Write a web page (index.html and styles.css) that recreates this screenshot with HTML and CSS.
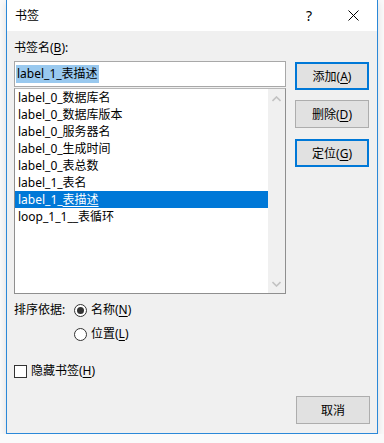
FILE: index.html
```html
<!DOCTYPE html>
<html lang="zh-CN">
<head>
    <meta charset="UTF-8">
    <title>书签</title>
    <link rel="stylesheet" href="styles.css">
</head>
<body>
    <div class="window">
        <!-- Title bar -->
        <div class="titlebar">
            <span class="title">书签</span>
            <span class="help">?</span>
            <span class="close">
                <svg width="11" height="11" viewBox="0 0 11 11">
                    <path d="M0.5 0.5 L10.5 10.5 M10.5 0.5 L0.5 10.5" stroke="#000" stroke-width="1" fill="none"/>
                </svg>
            </span>
        </div>

        <div class="content">
            <div class="main">
                <div class="left">
                    <div class="field-label">书签名(<u>B</u>):</div>
                    <div class="name-input"><span class="selected-text">label_1_表描述</span></div>
                    <div class="listbox">
                        <ul class="items">
                            <li>label_0_数据库名</li>
                            <li>label_0_数据库版本</li>
                            <li>label_0_服务器名</li>
                            <li>label_0_生成时间</li>
                            <li>label_0_表总数</li>
                            <li>label_1_表名</li>
                            <li class="active">label_1_<u>表描述</u></li>
                            <li>loop_1_1__表循环</li>
                        </ul>
                        <div class="scrollbar">
                            <svg width="9" height="6" viewBox="0 0 9 6">
                                <path d="M0.5 5 L4.5 1 L8.5 5" stroke="#c2c2c2" stroke-width="1.6" fill="none"/>
                            </svg>
                            <svg width="9" height="6" viewBox="0 0 9 6">
                                <path d="M0.5 1 L4.5 5 L8.5 1" stroke="#c2c2c2" stroke-width="1.6" fill="none"/>
                            </svg>
                        </div>
                    </div>
                </div>

                <div class="buttons">
                    <button class="btn default">添加(<u>A</u>)</button>
                    <button class="btn">删除(<u>D</u>)</button>
                    <button class="btn default">定位(<u>G</u>)</button>
                </div>
            </div>

            <!-- Sort order -->
            <div class="sort-row">
                <span class="sort-label">排序依据:</span>
                <span class="radio checked"></span>
                <span>名称(<u>N</u>)</span>
            </div>
            <div class="sort-row second">
                <span class="radio"></span>
                <span>位置(<u>L</u>)</span>
            </div>

            <div class="check-row">
                <span class="checkbox"></span>
                <span>隐藏书签(<u>H</u>)</span>
            </div>

            <div class="footer">
                <button class="btn">取消</button>
            </div>
        </div>
    </div>
</body>
</html>
```

FILE: styles.css
```css
* {
    margin: 0;
    padding: 0;
    box-sizing: border-box;
}

body {
    background: #fafafa;
    font-family: "Noto Sans", "Noto Sans CJK SC", sans-serif;
    font-size: 12px;
    color: #000;
}

u {
    text-decoration: underline;
    text-underline-offset: 2px;
}

.window {
    margin-left: 6px;
    width: 372px;
    border: 1px solid #2b88d8;
    border-top: none;
    background: #f0f0f0;
    box-shadow: 0 2px 8px rgba(0, 0, 0, 0.12);
}

.titlebar {
    height: 31px;
    background: #fff;
    display: flex;
    align-items: center;
    padding-left: 8px;
}

.title {
    flex: 1;
    line-height: 16px;
}

.help {
    width: 46px;
    text-align: center;
    font-size: 14px;
    margin-right: -2px;
}

.close {
    width: 46px;
    height: 31px;
    display: flex;
    align-items: center;
    justify-content: center;
    margin-right: 1px;
}

.content {
    padding: 9px 7px 9px 7px;
}

.main {
    display: flex;
}

.left {
    width: 272px;
}

.field-label {
    line-height: 16px;
}

.name-input {
    margin-top: 5px;
    height: 26px;
    background: #fff;
    border: 1px solid #a8a8a8;
    padding: 3px 1px;
}

.selected-text {
    display: inline-block;
    background: #99c9ef;
    line-height: 18px;
    padding: 0 1px;
}

.listbox {
    margin-top: 1px;
    height: 206px;
    border: 1px solid #8f8f8f;
    border-top-color: #b8b8b8;
    background: #fff;
    display: flex;
}

.items {
    list-style: none;
    flex: 1;
}

.items li {
    line-height: 17px;
    height: 17px;
    padding-left: 3px;
    white-space: nowrap;
}

.items li.active {
    background: #0078d7;
    color: #fff;
}

.scrollbar {
    width: 17px;
    background: #f0f0f0;
    display: flex;
    flex-direction: column;
    justify-content: space-between;
    align-items: center;
    padding: 7px 0 6px;
}

.buttons {
    margin-left: 9px;
    margin-top: 22px;
    display: flex;
    flex-direction: column;
    gap: 10px;
}

.btn {
    width: 74px;
    height: 28px;
    background: #e1e1e1;
    border: 1px solid #adadad;
    font-family: inherit;
    font-size: 12px;
    color: #000;
}

.btn.default {
    border: 2px solid #0078d7;
}

.buttons .btn:last-child {
    margin-top: 1px;
}

.sort-row {
    margin-top: 8px;
    display: flex;
    align-items: center;
    line-height: 16px;
}

.sort-row.second {
    padding-left: 60px;
}

.sort-label {
    width: 60px;
}

.radio {
    width: 13px;
    height: 13px;
    border: 1px solid #333;
    border-radius: 50%;
    background: #fff;
    margin-right: 4px;
    display: flex;
    align-items: center;
    justify-content: center;
}

.radio.checked::after {
    content: "";
    width: 7px;
    height: 7px;
    border-radius: 50%;
    background: #333;
}

.check-row {
    margin-top: 21px;
    display: flex;
    align-items: center;
    line-height: 16px;
}

.checkbox {
    width: 13px;
    height: 13px;
    border: 1px solid #333;
    background: #fff;
    margin-right: 4px;
}

.footer {
    margin-top: 17px;
    display: flex;
    justify-content: flex-end;
}
```
